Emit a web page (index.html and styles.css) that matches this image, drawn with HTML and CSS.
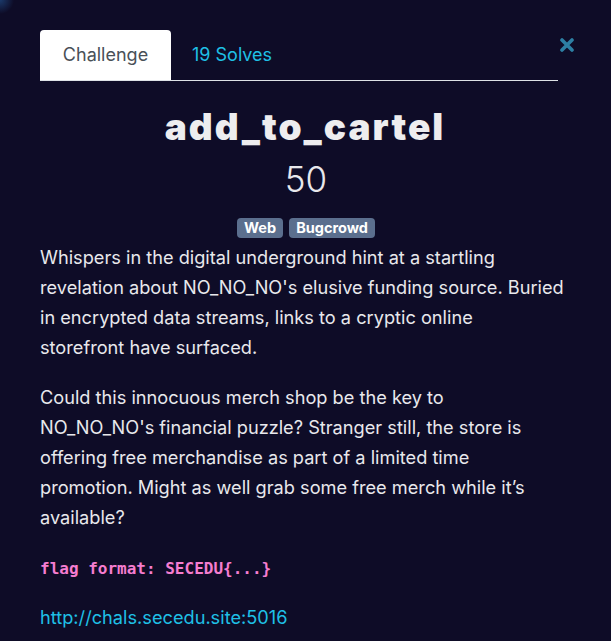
FILE: index.html
```html
<!DOCTYPE html>
<html>
<head>
<meta charset="utf-8">
<link rel="stylesheet" href="styles.css">
</head>
<body>
<div class="modal">
  <button class="close" aria-label="Close">
    <svg width="14" height="14" viewBox="0 0 14 14"><path d="M2 2 L12 12 M12 2 L2 12" stroke="#2d7fa3" stroke-width="3.6" stroke-linecap="round"/></svg>
  </button>
  <div class="tabs">
    <div class="tab active">Challenge</div>
    <div class="tab">19 Solves</div>
  </div>
  <h1 class="title">add_to_cartel</h1>
  <div class="value">50</div>
  <div class="tags">
    <span class="badge">Web</span>
    <span class="badge">Bugcrowd</span>
  </div>
  <div class="desc">
    <p>Whispers in the digital underground hint at a startling<br>revelation about NO_NO_NO's elusive funding source. Buried<br>in encrypted data streams, links to a cryptic online<br>storefront have surfaced.</p>
    <p>Could this innocuous merch shop be the key to<br>NO_NO_NO's financial puzzle? Stranger still, the store is<br>offering free merchandise as part of a limited time<br>promotion. Might as well grab some free merch while it’s<br>available?</p>
    <p class="flag"><code>flag format: SECEDU{...}</code></p>
    <p><a href="#">http://chals.secedu.site:5016</a></p>
  </div>
</div>
</body>
</html>
```
FILE: styles.css
```css
html, body {
  margin: 0;
  padding: 0;
  background: #0e0c27;
  height: 100%;
  overflow: hidden;
}
body {
  font-family: "Inter", "Lato", sans-serif;
  color: #e8e8ec;
  background: radial-gradient(circle at 0 0, #1b3a6b 0, #0e0c27 14px);
}
.modal {
  position: relative;
  padding: 30px 20px 0 40px;
}
.close {
  position: absolute;
  top: 38px;
  right: 37px;
  background: none;
  border: 0;
  padding: 0;
  width: 14px;
  height: 14px;
  cursor: pointer;
}
.close svg { display: block; }
.tabs {
  display: flex;
  border-bottom: 1px solid #dee2e6;
  height: 50px;
  margin-right: 33px;
}
.tab {
  font-size: 18px;
  padding: 0 21px;
  line-height: 50px;
  color: #1fc0e6;
}
.tab.active {
  background: #fff;
  color: #495057;
  border-radius: 4px 4px 0 0;
  width: 89px;
  text-align: center;
}
.title {
  margin: 23px 21px 0 0;
  text-align: center;
  font-size: 37px;
  font-weight: 900;
  letter-spacing: 2px;
  line-height: 46px;
  color: #ededef;
}
.value {
  text-align: center;
  font-size: 35px;
  font-weight: 300;
  line-height: 44px;
  margin: 7px 19px 0 0;
}
.tags {
  display: flex;
  justify-content: center;
  gap: 6px;
  margin: 17px 19px 0 0;
}
.badge {
  background: #5b6f8e;
  color: #fff;
  font-weight: 700;
  font-size: 14.5px;
  line-height: 20px;
  padding: 0 7px;
  border-radius: 4px;
}
.desc {
  margin-top: 4px;
  font-size: 18.2px;
  line-height: 30px;
}
.desc p {
  margin: 0 0 20px;
}
.desc p.flag {
  margin-bottom: 18px;
}
code {
  font-family: "DejaVu Sans Mono", monospace;
  font-weight: bold;
  font-size: 16px;
  color: #f57dd0;
}
a {
  color: #1fc0e6;
  text-decoration: none;
}
```
